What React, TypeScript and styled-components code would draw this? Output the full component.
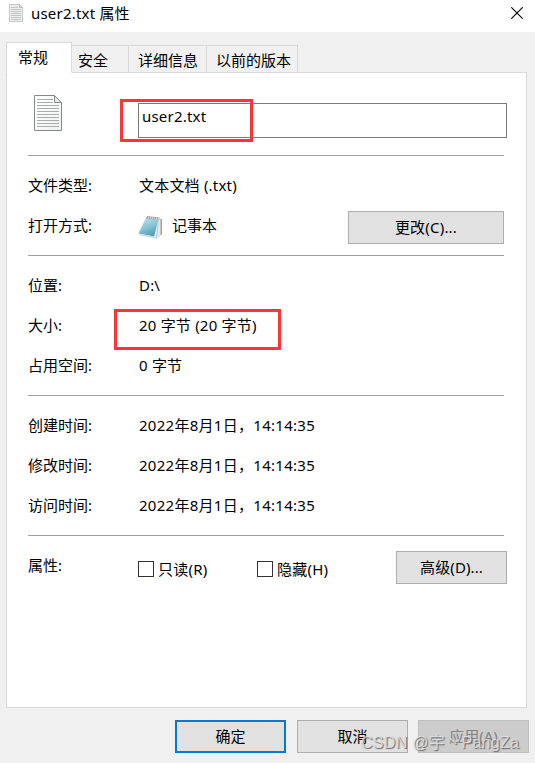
import React from "react";
import styled, { createGlobalStyle } from "styled-components";

const GlobalStyle = createGlobalStyle`
  * { box-sizing: border-box; }
  body {
    margin: 0;
    font-family: "Noto Sans", "Noto Sans CJK SC", sans-serif;
    font-size: 15px;
    line-height: 20px;
    color: #000;
  }
  button { font: inherit; padding: 0; margin: 0; }
`;

const Dialog = styled.div`
  position: relative;
  width: 535px;
  height: 763px;
  background: #f0f0f0;
  overflow: hidden;
  white-space: nowrap;
`;

const TitleBar = styled.header`
  height: 32px;
  padding: 0 12px 0 9px;
  display: flex;
  align-items: flex-start;
  background: #fff;
`;

const TitleIcon = styled.div`
  width: 22px;
  padding-top: 4px;
  line-height: 0;
`;

const Title = styled.h1`
  flex: 1;
  margin: 0;
  padding-top: 3px;
  font-size: 15px;
  font-weight: 400;
  letter-spacing: 0.2px;
`;

const CloseButton = styled.button`
  border: 0;
  background: none;
  margin-top: 7px;
  width: 12px;
  height: 12px;
  line-height: 0;
`;

const Tabs = styled.nav`
  display: flex;
  align-items: flex-end;
  height: 31px;
  margin-top: 10px;
  padding-left: 6px;
`;

const Tab = styled.div<{ $width: number; $active?: boolean; $pad: number }>`
  width: ${(p) => p.$width}px;
  height: ${(p) => (p.$active ? 31 : 28)}px;
  padding: 4px 0 0 ${(p) => p.$pad}px;
  border: 1px solid #d9d9d9;
  border-left-width: ${(p) => (p.$active ? 1 : 0)}px;
  border-bottom-color: ${(p) => (p.$active ? "#fff" : "#d9d9d9")};
  background: ${(p) => (p.$active ? "#fff" : "#f0f0f0")};
  z-index: 1;
`;

const Panel = styled.main`
  width: 521px;
  height: 636px;
  margin: -1px 0 0 6px;
  padding: 0 19px 0 21px;
  border: 1px solid #d9d9d9;
  background: #fff;
`;

const FileHeader = styled.div`
  display: flex;
  align-items: flex-start;
  height: 82px;
`;

const FileIcon = styled.div`
  width: 110px;
  padding: 22px 0 0 6px;
  line-height: 0;
`;

const NameInput = styled.div`
  width: 369px;
  height: 35px;
  margin-top: 30px;
  padding: 2px 0 0 3px;
  border: 1px solid #7a7a7a;
  letter-spacing: 0.2px;
`;

const Section = styled.section`
  width: 476px;
  padding: 10px 0 9px;
  border-top: 1px solid #a0a0a0;
`;

const Row = styled.div`
  display: flex;
  align-items: center;
  height: 40px;
  padding-bottom: 2px;
`;

const Label = styled.div`
  width: 111px;
  flex: none;
`;

const Value = styled.div<{ $track?: number }>`
  letter-spacing: ${(p) => p.$track ?? 0}px;
`;

const AppIcon = styled.div`
  width: 34px;
  margin-left: -1px;
  padding-top: 5px;
  line-height: 0;
`;

const Button = styled.button<{ $width?: number; $kind?: "default" | "disabled" }>`
  flex: none;
  width: ${(p) => p.$width ?? 111}px;
  height: 33px;
  padding-bottom: 2px;
  color: ${(p) => (p.$kind === "disabled" ? "#838383" : "#000")};
  background: ${(p) => (p.$kind === "disabled" ? "#ccc" : "#e1e1e1")};
  border: ${(p) =>
    p.$kind === "default" ? "2px solid #0078d7" : p.$kind === "disabled" ? "1px solid #bfbfbf" : "1px solid #adadad"};
`;

const ChangeButton = styled(Button)`
  margin: 5px 0 0 auto;
  letter-spacing: 0.2px;
`;

const AdvancedButton = styled(Button)`
  margin: 5px -3px 0 auto;
  letter-spacing: 0.1px;
`;

const Check = styled.label<{ $width: number }>`
  display: flex;
  align-items: center;
  gap: 4px;
  width: ${(p) => p.$width}px;
  margin: 0 1px 0 -1px;
  padding-top: 8px;
  letter-spacing: 0.25px;
`;

const Box = styled.span`
  width: 16px;
  height: 16px;
  border: 1px solid #333;
`;

const Footer = styled.footer`
  display: flex;
  padding: 12px 6px 0 175px;
`;

const FooterGap = styled.div<{ $width: number }>`
  width: ${(p) => p.$width}px;
`;

const Highlight = styled.div<{ $x: number; $y: number; $w: number; $h: number }>`
  position: absolute;
  left: ${(p) => p.$x}px;
  top: ${(p) => p.$y}px;
  width: ${(p) => p.$w}px;
  height: ${(p) => p.$h}px;
  border: 3px solid #fc3636;
`;

const Watermark = styled.div`
  position: absolute;
  left: 361px;
  top: 733px;
  font-family: "Liberation Sans", "Noto Sans CJK SC", sans-serif;
  font-size: 16px;
  letter-spacing: 0.3px;
  color: rgba(226, 226, 226, 0.85);
  text-shadow: 1px 1px 1px #666;
  white-space: pre;
`;

const DocIcon = () => (
  <svg width="28" height="36" viewBox="0 0 28 36">
    <defs>
      <linearGradient id="paper" x1="0" y1="0" x2="1" y2="1">
        <stop offset="0" stopColor="#fff" />
        <stop offset="1" stopColor="#f0f1f1" />
      </linearGradient>
    </defs>
    <path d="M.5.5H20.500L27.500 7.500V35.500H.5Z" fill="url(#paper)" stroke="#858989" />
    <path
      d="M3 4.500H19M3 7.500H19M3 10.500H25M3 13.500H25M3 16.500H25M3 19.500H25M3 22.500H25M3 25.500H25M3 28.500H25M3 31.500H25"
      stroke="#a8adad"
    />
    <path d="M20.500.5V7.500H27.500Z" fill="#e4e7e7" stroke="#858989" />
  </svg>
);

const SmallDocIcon = () => (
  <svg width="14" height="18" viewBox="0 0 14 18">
    <path d="M.5.5H10.500L13.500 3.500V17.500H.5Z" fill="#ededed" stroke="#c3c6c6" />
    <path
      d="M2 3.500H9M2 5.500H12M2 7.500H12M2 9.500H12M2 11.500H12M2 13.500H12M2 15.500H12"
      stroke="#c2c5c5"
    />
    <path d="M10.500.5V3.500H13.500" fill="none" stroke="#b4b7b7" />
  </svg>
);

const NotepadIcon = () => (
  <svg width="25" height="24" viewBox="0 0 25 24">
    <defs>
      <linearGradient id="cover" x1="0.3" y1="0" x2="0.7" y2="1">
        <stop offset="0" stopColor="#b9e0ea" />
        <stop offset="0.5" stopColor="#84c4d3" />
        <stop offset="1" stopColor="#459cb0" />
      </linearGradient>
    </defs>
    <path d="M20 3H24V18.500L20 20Z" fill="#b59e78" />
    <path d="M20 2L22.500 3V20L19 23L15 22Z" fill="#dfe7ef" />
    <path d="M20.500 4L18.500 22" stroke="#b4c5d0" strokeWidth=".7" />
    <path d="M8 1.500L20.500 3L16 20.500L.5 17.500Z" fill="url(#cover)" />
    <path d="M.5 17.500L16 20.500L17.500 22.500L1 19Z" fill="#c4dfe6" />
    <path d="M9 0L22 1.500L21 3.500L8 2.500Z" fill="#a7aaa8" />
    <path d="M10 1.500L21 2.500" stroke="#dedede" strokeDasharray="1 1" />
  </svg>
);

const fileRows: [string, string][] = [
  ["位置:", "D:\\"],
  ["大小:", "20 字节 (20 字节)"],
  ["占用空间:", "0 字节"],
];

const timeRows: [string, string][] = [
  ["创建时间:", "2022年8月1日，14:14:35"],
  ["修改时间:", "2022年8月1日，14:14:35"],
  ["访问时间:", "2022年8月1日，14:14:35"],
];

export default function App() {
  return (
    <>
      <GlobalStyle />
      <Dialog>
        <TitleBar>
          <TitleIcon>
            <SmallDocIcon />
          </TitleIcon>
          <Title>user2.txt 属性</Title>
          <CloseButton aria-label="关闭">
            <svg width="12" height="12" viewBox="0 0 12 12">
              <path d="M.3.3L11.700 11.700M11.700.3L.3 11.700" stroke="#000" strokeWidth="1.1" />
            </svg>
          </CloseButton>
        </TitleBar>
        <Tabs>
          <Tab $width={66} $pad={11} $active>常规</Tab>
          <Tab $width={57} $pad={6}>安全</Tab>
          <Tab $width={78} $pad={9}>详细信息</Tab>
          <Tab $width={91} $pad={9}>以前的版本</Tab>
        </Tabs>
        <Panel>
          <FileHeader>
            <FileIcon>
              <DocIcon />
            </FileIcon>
            <NameInput>user2.txt</NameInput>
          </FileHeader>
          <Section>
            <Row>
              <Label>文件类型:</Label>
              <Value $track={0.2}>文本文档 (.txt)</Value>
            </Row>
            <Row>
              <Label>打开方式:</Label>
              <AppIcon>
                <NotepadIcon />
              </AppIcon>
              <Value>记事本</Value>
              <ChangeButton $width={156}>更改(C)...</ChangeButton>
            </Row>
          </Section>
          <Section>
            {fileRows.map(([label, value]) => (
              <Row key={label}>
                <Label>{label}</Label>
                <Value $track={0.2}>{value}</Value>
              </Row>
            ))}
          </Section>
          <Section>
            {timeRows.map(([label, value]) => (
              <Row key={label}>
                <Label>{label}</Label>
                <Value $track={0.28}>{value}</Value>
              </Row>
            ))}
          </Section>
          <Section>
            <Row>
              <Label>属性:</Label>
              <Check $width={119}>
                <Box />
                只读(R)
              </Check>
              <Check $width={90}>
                <Box />
                隐藏(H)
              </Check>
              <AdvancedButton>高级(D)...</AdvancedButton>
            </Row>
          </Section>
        </Panel>
        <Footer>
          <Button $kind="default">确定</Button>
          <FooterGap $width={11} />
          <Button>取消</Button>
          <FooterGap $width={10} />
          <Button $kind="disabled">应用(A)</Button>
        </Footer>
        <Highlight $x={120} $y={99} $w={133} $h={43} />
        <Highlight $x={114} $y={309} $w={167} $h={41} />
        <Watermark>CSDN @宇丶PangZa</Watermark>
      </Dialog>
    </>
  );
}
